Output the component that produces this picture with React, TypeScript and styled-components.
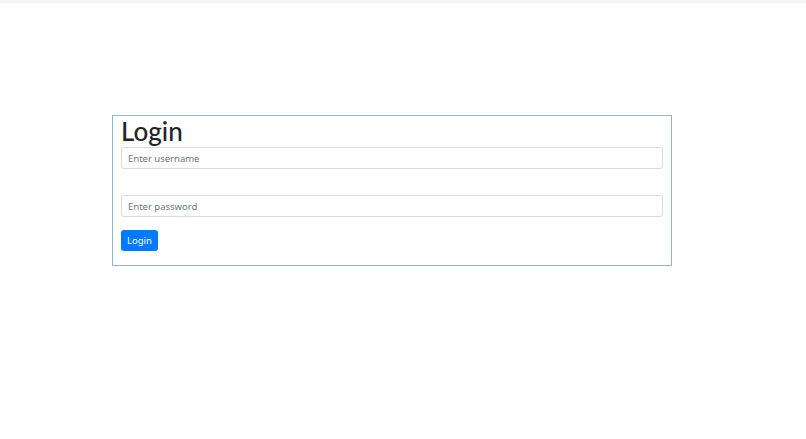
import * as React from 'react';
import styled, { createGlobalStyle } from 'styled-components';

const GlobalStyle = createGlobalStyle`
  html, body {
    margin: 0;
    padding: 0;
    background: #ffffff;
  }
  body {
    font-family: "Noto Sans", "Open Sans", "Liberation Sans", sans-serif;
    color: #212529;
  }
`;

const Page = styled.div`
  min-height: 439px;
  border-top: 3px solid #f4f4f4;
  box-sizing: border-box;
  padding: 112px 0 0 112px;
`;

const Card = styled.form`
  width: 560px;
  box-sizing: border-box;
  border: 1px solid #8fb6d2;
  padding: 0 8px 14px 8px;
  display: flex;
  flex-direction: column;
  align-items: flex-start;
`;

const Title = styled.h1`
  margin: 0;
  font-family: Lato, "Noto Sans", sans-serif;
  font-size: 26px;
  line-height: 31px;
  font-weight: 500;
  color: #212529;
`;

const Field = styled.input<{ $gap: number }>`
  width: 100%;
  height: 22px;
  box-sizing: border-box;
  margin-bottom: ${(p) => p.$gap}px;
  padding: 0 6px;
  border: 1px solid #d6dade;
  border-radius: 3px;
  font-family: inherit;
  font-size: 9.5px;
  color: #495057;
  background: #fff;
  outline: none;

  &::placeholder {
    color: #6c757d;
  }
`;

const Button = styled.button`
  height: 21px;
  padding: 0 6px;
  border: none;
  border-radius: 3px;
  background: #007bff;
  color: #fff;
  font-family: inherit;
  font-size: 9.5px;
  cursor: pointer;
`;

const App = () => (
  <>
    <GlobalStyle />
    <Page>
      <Card onSubmit={(e) => e.preventDefault()}>
        <Title>Login</Title>
        <Field $gap={26} type="text" placeholder="Enter username" />
        <Field $gap={13} type="password" placeholder="Enter password" />
        <Button type="submit">Login</Button>
      </Card>
    </Page>
  </>
);

export default App;
